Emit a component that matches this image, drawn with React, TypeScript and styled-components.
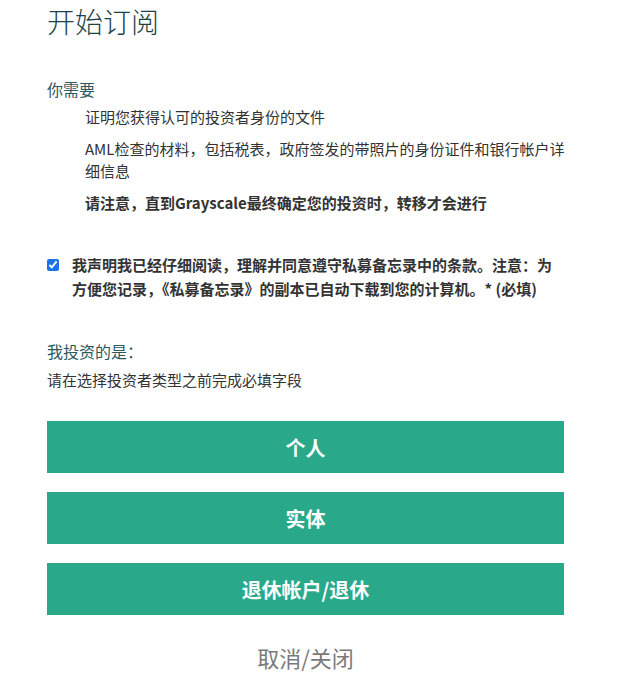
import React, { FC } from "react";
import styled, { createGlobalStyle } from "styled-components";

const GlobalStyle = createGlobalStyle`
  body {
    margin: 0;
    background: #ffffff;
    font-family: "Noto Sans CJK SC", "Noto Sans", sans-serif;
  }
`;

const Page = styled.div`
  width: 517px;
  padding: 4px 0 0 47px;
`;

const Title = styled.h1`
  margin: 0;
  font-size: 28px;
  font-weight: 300;
  line-height: 34px;
  color: #1d4248;
`;

const Label = styled.div<{ $top: number }>`
  margin-top: ${(p) => p.$top}px;
  font-size: 16px;
  line-height: 22px;
  color: #2c5862;
`;

const Needs = styled.ul`
  list-style: none;
  margin: 6px -3px 0 0;
  padding: 0 0 0 38px;
`;

const Need = styled.li<{ $bold?: boolean }>`
  font-size: 15px;
  font-weight: ${(p) => (p.$bold ? 700 : 400)};
  line-height: 22px;
  color: #333333;
  margin-bottom: 10px;
`;

const Agree = styled.label`
  display: flex;
  align-items: flex-start;
  gap: 13px;
  margin-top: 39px;
  padding-right: 10px;
  font-size: 15px;
  font-weight: 700;
  line-height: 24px;
  color: #333333;
`;

const Check = styled.input`
  width: 12px;
  height: 12px;
  margin: 6px 0 0;
  flex: none;
  accent-color: #1a73e8;
`;

const Hint = styled.div`
  margin-top: 8px;
  font-size: 15px;
  line-height: 20px;
  color: #333333;
`;

const Choices = styled.div`
  display: flex;
  flex-direction: column;
  gap: 19px;
  margin-top: 31px;
`;

const Choice = styled.button`
  height: 52px;
  border: none;
  background: #2aa98a;
  color: #ffffff;
  font-family: inherit;
  font-size: 20px;
  font-weight: 700;
  cursor: pointer;
`;

const Cancel = styled.button`
  display: block;
  margin: 25px auto 0;
  border: none;
  background: none;
  font-family: inherit;
  font-size: 22px;
  font-weight: 400;
  color: #7a7a7a;
  cursor: pointer;
`;

const App: FC = () => (
  <>
    <GlobalStyle />
    <Page>
      <Title>开始订阅</Title>
      <Label $top={40}>你需要</Label>
      <Needs>
        <Need>证明您获得认可的投资者身份的文件</Need>
        <Need>AML检查的材料，包括税表，政府签发的带照片的身份证件和银行帐户详细信息</Need>
        <Need $bold>请注意，直到Grayscale最终确定您的投资时，转移才会进行</Need>
      </Needs>
      <Agree>
        <Check type="checkbox" defaultChecked />
        <span>
          我声明我已经仔细阅读，理解并同意遵守私募备忘录中的条款。注意：为方便您记录，《私募备忘录》的副本已自动下载到您的计算机。* (必填)
        </span>
      </Agree>
      <Label $top={39}>我投资的是：</Label>
      <Hint>请在选择投资者类型之前完成必填字段</Hint>
      <Choices>
        <Choice>个人</Choice>
        <Choice>实体</Choice>
        <Choice>退休帐户/退休</Choice>
      </Choices>
      <Cancel>取消/关闭</Cancel>
    </Page>
  </>
);

export default App;
